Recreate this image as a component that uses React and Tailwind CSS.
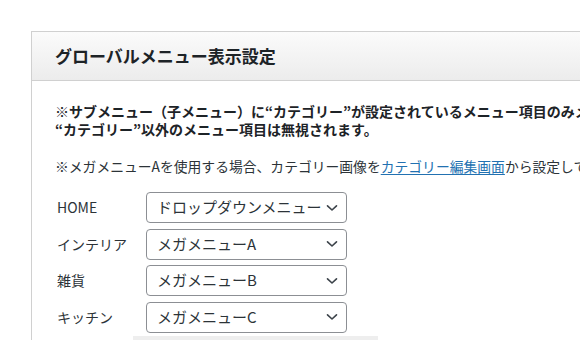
import React from "react";

function Chevron() {
  return (
    <svg width="12" height="8" viewBox="0 0 12 8" className="shrink-0">
      <path d="M1.5 1.8 L6 6 L10.5 1.8" fill="none" stroke="#3c434a" strokeWidth="1.6" strokeLinecap="round" strokeLinejoin="round" />
    </svg>
  );
}

function Row({ label, value }) {
  return (
    <div className="flex items-center">
      <div className="w-[91px] pl-[2px] text-[14px] text-[#2c3338]">{label}</div>
      <div className="flex h-[31px] w-[201px] items-center justify-between rounded-[4px] border border-[#8c8f94] bg-white pl-[10px] pr-[8px] text-[15px] text-[#2c3338]">
        <span className="whitespace-nowrap">{value}</span>
        <Chevron />
      </div>
    </div>
  );
}

export default function App() {
  return (
    <div
      className="relative h-[340px] w-[580px] overflow-hidden bg-white"
      style={{ fontFamily: '"Noto Sans CJK JP", "Noto Sans", sans-serif' }}
    >
      <div className="ml-[31px] mt-[31px] w-[700px] border border-[#d0d0d0] bg-white">
        <div className="flex h-[49px] items-center border-b border-[#d0d0d0] bg-gradient-to-b from-[#fbfbfb] to-[#ececec] pl-[23px]">
          <h2 className="text-[17px] font-bold text-[#1d2327]">グローバルメニュー表示設定</h2>
        </div>
        <div className="px-[23px] pt-[21px]">
          <p className="whitespace-nowrap text-[14px] font-bold leading-[18px] text-[#1d2327]">
            ※サブメニュー（子メニュー）に“カテゴリー”が設定されているメニュー項目のみメガメニューが表示されます。
            <br />
            “カテゴリー”以外のメニュー項目は無視されます。
          </p>
          <p className="mt-[18px] whitespace-nowrap text-[13.8px] leading-[20px] text-[#2c3338]">
            ※メガメニューAを使用する場合、カテゴリー画像を
            <span className="text-[#2271b1] underline underline-offset-[2px]">カテゴリー編集画面</span>
            から設定してください。
          </p>
          <div className="mt-[16px] flex flex-col gap-[5.5px]">
            <Row label="HOME" value="ドロップダウンメニュー" />
            <Row label="インテリア" value="メガメニューA" />
            <Row label="雑貨" value="メガメニューB" />
            <Row label="キッチン" value="メガメニューC" />
          </div>
          <div className="ml-[78px] mt-[3px] h-[6px] w-[245px] bg-[#eeeeee]" />
        </div>
      </div>
    </div>
  );
}
